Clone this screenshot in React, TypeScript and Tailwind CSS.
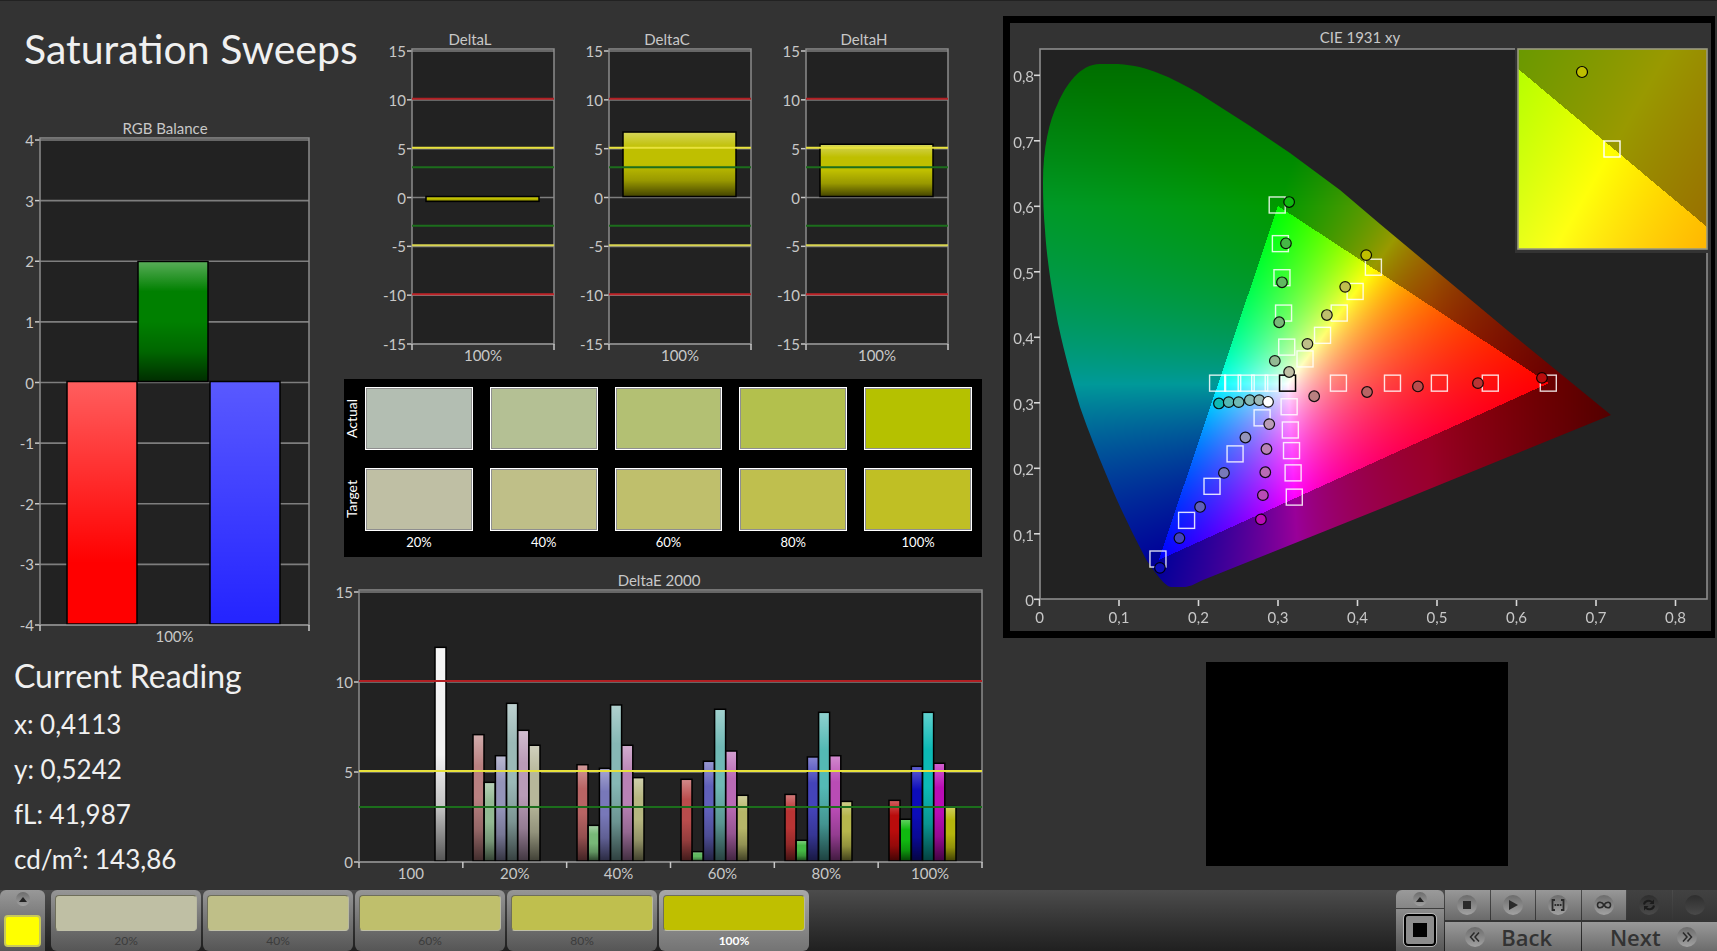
import { useLayoutEffect, useRef } from "react"
import type { ReactNode } from "react"
import clsx from "clsx"

interface Bar {
  x: number
  width: number
  value: number
  color: string
  shade?: string
}

interface Limit {
  value: number
  color: string
}

interface BarChartProps {
  title: string
  titleX: number
  width: number
  height: number
  left: number
  right: number
  top: number
  bottom: number
  min: number
  max: number
  step: number
  bars: Bar[]
  limits?: Limit[]
  categories: string[]
}

const AXIS_TEXT = "fill-[#c8c8c8] text-[15px]"

const deltaLimits: Limit[] = [
  { value: 10, color: "#b22024" },
  { value: 5, color: "#e8e23c" },
  { value: 3, color: "#1c6e1c" },
  { value: -3, color: "#1c6e1c" },
  { value: -5, color: "#d8d450" },
  { value: -10, color: "#c02428" },
]

const swatches = [
  { label: "20%", actual: "#b3beb2", target: "#bfbfa4" },
  { label: "40%", actual: "#b4c094", target: "#bfbf88" },
  { label: "60%", actual: "#b3c073", target: "#bfbf6c" },
  { label: "80%", actual: "#b3c04d", target: "#bfbf4e" },
  { label: "100%", actual: "#b5c100", target: "#c0bf24" },
]

const deltaE = [
  { label: "20%", values: [7.02, 4.37, 5.85, 8.76, 7.26, 6.43], colors: ["#b98080", "#93b993", "#9494b9", "#9bb9b7", "#b99bb7", "#b7b79a"] },
  { label: "40%", values: [5.35, 1.98, 5.15, 8.67, 6.43, 4.63], colors: ["#b96464", "#78b878", "#7878b9", "#86b8b5", "#b982b5", "#b6b680"] },
  { label: "60%", values: [4.54, 0.52, 5.54, 8.43, 6.11, 3.65], colors: ["#b94c4c", "#60b860", "#6060b9", "#70b9b5", "#b96ab5", "#b6b668"] },
  { label: "80%", values: [3.7, 1.15, 5.78, 8.26, 5.85, 3.31], colors: ["#b93434", "#45b845", "#4444b9", "#54b9b5", "#b94cb5", "#b6b64c"] },
  { label: "100%", values: [3.37, 2.32, 5.26, 8.26, 5.43, 3.02], colors: ["#b90c0c", "#10b910", "#0c0cb9", "#0cb9b5", "#b90cb5", "#b6b60c"] },
]

const deltaEBars: Bar[] = [
  { x: 105, width: 11, value: 11.87, color: "#f2f2f2" },
  ...deltaE.flatMap((group, g) =>
    group.values.map((value, i) => ({
      x: 143 + g * 104 + i * 11.2,
      width: 11,
      value,
      color: group.colors[i],
    })),
  ),
]

const targets: [number, number][] = [
  [0.299, 0.602], [0.303, 0.543], [0.305, 0.491], [0.307, 0.437], [0.311, 0.385],
  [0.42, 0.507], [0.397, 0.47], [0.377, 0.437], [0.356, 0.403], [0.334, 0.367],
  [0.376, 0.33], [0.444, 0.33], [0.503, 0.33], [0.567, 0.33], [0.64, 0.33],
  [0.224, 0.33], [0.243, 0.33], [0.26, 0.33], [0.277, 0.33], [0.294, 0.33],
  [0.314, 0.294], [0.3155, 0.2585], [0.317, 0.227], [0.319, 0.193], [0.3205, 0.156],
  [0.28, 0.277], [0.246, 0.222], [0.217, 0.1725], [0.185, 0.1205], [0.149, 0.0615],
]

const readings: [number, number, string][] = [
  [0.314, 0.6065, "#10b910"], [0.31, 0.5435, "#45b845"], [0.305, 0.484, "#60b860"], [0.3015, 0.423, "#78b878"], [0.296, 0.364, "#93b993"],
  [0.411, 0.5255, "#bfbf00"], [0.3845, 0.477, "#bfbf4e"], [0.3615, 0.434, "#bfbf6c"], [0.337, 0.39, "#bfbf88"], [0.314, 0.347, "#bfbfa4"],
  [0.3455, 0.31, "#b98080"], [0.412, 0.3165, "#b96464"], [0.476, 0.325, "#b94c4c"], [0.5515, 0.33, "#b93434"], [0.632, 0.338, "#b90c0c"],
  [0.2257, 0.299, "#10b9b5"], [0.238, 0.301, "#54b9b5"], [0.2505, 0.301, "#70b9b5"], [0.2645, 0.304, "#86b8b5"], [0.2765, 0.304, "#9bb9b7"],
  [0.289, 0.2675, "#b99bb7"], [0.2855, 0.2295, "#b982b5"], [0.284, 0.194, "#b96ab5"], [0.281, 0.159, "#b94cb5"], [0.2785, 0.122, "#b90cb5"],
  [0.259, 0.247, "#9494b9"], [0.232, 0.193, "#7878b9"], [0.202, 0.141, "#6060b9"], [0.176, 0.0935, "#4444b9"], [0.1515, 0.048, "#0c0cb9"],
  [0.2875, 0.3015, "#ffffff"],
]

// spectral locus in the panel's own units
const LOCUS =
  "M33 160 C33 125 39 98 48 80 C56 62 70 41 90 41 L108 41 C124 42 136 45 148 50 C162 55 176 63 190 71 L240 103 L280 130 L330 167 L370 201 L497 307 L601 392 L390 478 L193 557 C182 562 180 564 173 564 L162 564 C156 564 150 556 137 538 C128 521 116 497 107 477 C98 456 81 416 70 384 C62 358 54 328 49 305 C44 280 37 240 35 207 Q33 185 33 160 Z"

const cx = (x: number) => 29.5 + 795 * x
const cy = (y: number) => 576.3 - 655 * y

// linear sRGB at full intensity, dimmed outside the gamut triangle
function chromaColor(x: number, y: number): [number, number, number] {
  const X = x / y
  const Z = (1 - x - y) / y
  const lin = [
    3.2406 * X - 1.5372 - 0.4986 * Z,
    -0.9689 * X + 1.8758 + 0.0415 * Z,
    0.0557 * X - 0.204 + 1.057 * Z,
  ]
  const outside = lin.some((v) => v < -0.001)
  const peak = Math.max(...lin)
  const falloff = (1 - Math.max(0, x - 0.49) * 2) * (1 - Math.max(0, y - 0.6) * 1.3)
  const level = outside ? 153 * falloff : 255
  const [r, g, b] = lin.map((v) => (Math.max(v, 0) / peak) * level)
  return [r, g, b]
}

interface ChromaCanvasProps {
  width: number
  height: number
  toXY: (px: number, py: number) => [number, number]
  clip?: string
}

function ChromaCanvas({ width, height, toXY, clip }: ChromaCanvasProps) {
  const ref = useRef<HTMLCanvasElement>(null)

  useLayoutEffect(() => {
    const ctx = ref.current?.getContext("2d")
    if (!ctx) return
    const image = ctx.createImageData(width, height)
    for (let py = 0; py < height; py++) {
      for (let px = 0; px < width; px++) {
        const [x, y] = toXY(px + 0.5, py + 0.5)
        const [r, g, b] = chromaColor(x, Math.max(y, 0.001))
        const i = (py * width + px) * 4
        image.data[i] = r
        image.data[i + 1] = g
        image.data[i + 2] = b
        image.data[i + 3] = 255
      }
    }
    ctx.putImageData(image, 0, 0)
    if (clip) {
      ctx.globalCompositeOperation = "destination-in"
      ctx.fill(new Path2D(clip))
      ctx.globalCompositeOperation = "source-over"
    }
  }, [width, height, toXY, clip])

  return <canvas ref={ref} width={width} height={height} className="block" />
}

function Gradients() {
  return (
    <svg width="0" height="0" className="absolute" aria-hidden="true">
      <defs>
        <linearGradient id="gloss" x1="0" y1="0" x2="0" y2="1">
          <stop offset="0" stopColor="#fff" stopOpacity="0.35" />
          <stop offset="0.25" stopColor="#fff" stopOpacity="0" />
          <stop offset="0.5" stopColor="#000" stopOpacity="0" />
          <stop offset="0.75" stopColor="#000" stopOpacity="0.2" />
          <stop offset="1" stopColor="#000" stopOpacity="0.65" />
        </linearGradient>
        <linearGradient id="fade-red" x1="0" y1="0" x2="0" y2="1">
          <stop offset="0" stopColor="#fff" stopOpacity="0.37" />
          <stop offset="0.75" stopColor="#fff" stopOpacity="0" />
        </linearGradient>
        <linearGradient id="fade-blue" x1="0" y1="0" x2="0" y2="1">
          <stop offset="0" stopColor="#fff" stopOpacity="0.35" />
          <stop offset="1" stopColor="#fff" stopOpacity="0.14" />
        </linearGradient>
      </defs>
    </svg>
  )
}

function BarChart({
  title,
  titleX,
  width,
  height,
  left,
  right,
  top,
  bottom,
  min,
  max,
  step,
  bars,
  limits = [],
  categories,
}: BarChartProps) {
  const y = (v: number) => bottom - ((v - min) / (max - min)) * (bottom - top)
  const ticks: number[] = []
  for (let v = max; v >= min; v -= step) ticks.push(v)
  const slot = (right - left) / categories.length

  return (
    <svg viewBox={`0 0 ${width} ${height}`} className="block w-full" role="img" aria-label={title}>
      <text x={titleX} y={top - 6} textAnchor="middle" className={AXIS_TEXT}>
        {title}
      </text>
      <rect x={left} y={top - 2} width={right - left} height={bottom - top + 2} fill="#222222" />
      {ticks.map((v) => (
        <g key={v}>
          <line x1={left} x2={right} y1={y(v)} y2={y(v)} stroke="#7e7e7e" strokeWidth="1.6" />
          <line x1={left - 5} x2={left} y1={y(v)} y2={y(v)} stroke="#c8c8c8" strokeWidth="1.5" />
          <text x={left - 6} y={y(v) + 6} textAnchor="end" className={AXIS_TEXT}>
            {v}
          </text>
        </g>
      ))}
      {bars.map((bar, i) => {
        const y0 = y(Math.max(bar.value, 0)) - 1
        const h = Math.abs(y(bar.value) - y(0))
        return (
          <g key={i}>
            <rect x={bar.x} y={y0} width={bar.width} height={h} fill={bar.color} />
            <rect
              x={bar.x}
              y={y0}
              width={bar.width}
              height={h}
              fill={`url(#${bar.shade ?? "gloss"})`}
              stroke="#000"
              strokeWidth="1.5"
            />
          </g>
        )
      })}
      <path
        d={`M${left} ${bottom}V${top - 2}H${right}V${bottom}Z`}
        fill="none"
        stroke="#8c8c8c"
        strokeWidth="1.5"
      />
      {limits.map((limit) => (
        <line
          key={limit.value}
          x1={left}
          x2={right}
          y1={y(limit.value) - 1}
          y2={y(limit.value) - 1}
          stroke={limit.color}
          strokeWidth="2"
        />
      ))}
      {categories.map((label, i) => (
        <text key={label} x={left + slot * (i + 0.5)} y={bottom + 17} textAnchor="middle" className={AXIS_TEXT}>
          {label}
        </text>
      ))}
      {[...categories, "end"].map((key, i) => (
        <line
          key={key}
          x1={left + slot * i}
          x2={left + slot * i}
          y1={bottom}
          y2={bottom + 6}
          stroke="#c8c8c8"
          strokeWidth="1.5"
        />
      ))}
    </svg>
  )
}

const mainXY = (px: number, py: number): [number, number] => [(px - 29.5) / 795, (576.3 - py) / 655]
const insetXY = (px: number, py: number): [number, number] => [0.4193 + (px - 94) / 3800, 0.5053 - (py - 100) / 4000]

function CieDiagram() {
  return (
    <svg viewBox="0 0 701 608" className="block w-full" role="img" aria-label="CIE 1931 xy">
      <text x="350" y="20" textAnchor="middle" className={AXIS_TEXT}>
        CIE 1931 xy
      </text>
      <rect x="30" y="26" width="667" height="550" fill="#222222" />
      <foreignObject x="0" y="0" width="701" height="608">
        <ChromaCanvas width={701} height={608} toXY={mainXY} clip={LOCUS} />
      </foreignObject>
      <rect x="30" y="26" width="667" height="550" fill="none" stroke="#8c8c8c" strokeWidth="1.6" />
      {[0, 1, 2, 3, 4, 5, 6, 7, 8].map((n) => (
        <g key={n}>
          <line x1={cx(n / 10)} x2={cx(n / 10)} y1="577" y2="583" stroke="#d8d8d8" strokeWidth="1.6" />
          <text x={cx(n / 10)} y="600" textAnchor="middle" className={AXIS_TEXT}>
            {n === 0 ? "0" : `0,${n}`}
          </text>
          <line x1="24" x2="30" y1={cy(n / 10)} y2={cy(n / 10)} stroke="#d8d8d8" strokeWidth="1.6" />
          <text x="24" y={cy(n / 10) + 7} textAnchor="end" className={AXIS_TEXT}>
            {n === 0 ? "0" : `0,${n}`}
          </text>
        </g>
      ))}
      {targets.map(([x, y]) => (
        <rect
          key={`${x}-${y}`}
          x={cx(x) - 8}
          y={cy(y) - 8}
          width="16"
          height="16"
          fill="none"
          stroke="#fff"
          strokeOpacity="0.85"
          strokeWidth="1.4"
        />
      ))}
      <rect x={cx(0.312) - 8} y={cy(0.33) - 8} width="16" height="16" fill="none" stroke="#000" strokeWidth="1.5" />
      {readings.map(([x, y, color]) => (
        <circle key={`${x}-${y}`} cx={cx(x)} cy={cy(y)} r="5.3" fill={color} stroke="#000" strokeOpacity="0.9" strokeWidth="1.2" />
      ))}
      <rect x="505" y="23" width="194" height="207" fill="#333333" />
      <foreignObject x="508" y="26" width="189" height="200">
        <ChromaCanvas width={189} height={200} toXY={insetXY} />
      </foreignObject>
      <rect x="508" y="26" width="189" height="200" fill="none" stroke="#9a9a80" strokeWidth="1.6" />
      <rect x="594" y="118" width="16" height="16" fill="none" stroke="#fff" strokeWidth="1.4" />
      <circle cx="572" cy="49" r="5.5" fill="#bfbf00" stroke="#000" strokeWidth="1.2" />
    </svg>
  )
}

function SwatchRow({ label, colors }: { label: string; colors: string[] }) {
  return (
    <div className="flex items-stretch">
      <div className="flex w-[21px] items-center">
        <span className="rotate-180 text-sm leading-4 [writing-mode:vertical-rl]">{label}</span>
      </div>
      <div className="grid flex-1 grid-cols-5 gap-[17px]">
        {colors.map((color) => (
          <div
            key={color}
            className="h-[63px] border border-white shadow-[inset_0_0_0_1px_#8f8f8f]"
            style={{ backgroundColor: color }}
          />
        ))}
      </div>
    </div>
  )
}

function ComparePanel() {
  return (
    <section className="mt-[9px] mr-[21px] ml-[14px] h-[178px] bg-black pt-2 pr-[10px] text-white">
      <div className="flex flex-col gap-[18px]">
        <SwatchRow label="Actual" colors={swatches.map((s) => s.actual)} />
        <SwatchRow label="Target" colors={swatches.map((s) => s.target)} />
      </div>
      <div className="mt-[3px] ml-[21px] grid grid-cols-5 gap-[17px] text-center text-[13px] leading-4">
        {swatches.map((s) => (
          <span key={s.label}>{s.label}</span>
        ))}
      </div>
    </section>
  )
}

function Knob({ children, dark, small }: { children?: ReactNode; dark?: boolean; small?: boolean }) {
  return (
    <span
      className={clsx(
        "flex shrink-0 items-center justify-center rounded-full bg-linear-to-b",
        small ? "size-[14px]" : "size-5",
        dark ? "from-[#2e2e2e] to-[#4a4a4a]" : "from-[#6c6c6c] to-[#a2a2a2]",
      )}
    >
      {children}
    </span>
  )
}

function UpArrow() {
  return (
    <svg viewBox="0 0 10 6" className="h-[5px] w-2" aria-hidden="true">
      <path d="M5 0L10 6H0Z" fill="#222" />
    </svg>
  )
}

const transport = [
  {
    name: "Stop",
    icon: <path d="M6 6H14V14H6Z" fill="#2a2a2a" />,
  },
  {
    name: "Play",
    icon: <path d="M6 5L15 10L6 15Z" fill="#2a2a2a" />,
  },
  {
    name: "Read series",
    icon: (
      <g fill="none" stroke="#2a2a2a" strokeWidth="1.8">
        <path d="M7 5H4.500V15H7M13 5H15.500V15H13" />
        <path d="M6.500 10H13.500" strokeDasharray="1.8 0.8" />
      </g>
    ),
  },
  {
    name: "Read continuously",
    icon: (
      <path
        d="M10 10C8 6.500 3.500 6 3.500 10C3.500 14 8 13.500 10 10C12 6.500 16.500 6 16.500 10C16.500 14 12 13.500 10 10Z"
        fill="none"
        stroke="#2a2a2a"
        strokeWidth="1.6"
      />
    ),
  },
  {
    name: "Refresh",
    dark: true,
    icon: (
      <g fill="none" stroke="#1c1c1c" strokeWidth="2">
        <path d="M5 9.500C5.500 6 10 4.500 13 7M15 10.500C14.500 14 10 15.500 7 13" />
        <path d="M15 4.500V9H10.500ZM5 15.500V11H9.500Z" fill="#1c1c1c" stroke="none" />
      </g>
    ),
  },
  { name: "Record", dark: true, icon: null },
]

function Chevrons({ flip }: { flip?: boolean }) {
  return (
    <svg viewBox="0 0 20 20" className={clsx("size-5", flip && "rotate-180")} aria-hidden="true">
      <path d="M9.500 5.500L5.500 10L9.500 14.500M14 5.500L10 10L14 14.500" fill="none" stroke="#2a2a2a" strokeWidth="1.5" />
    </svg>
  )
}

function BottomBar() {
  return (
    <footer className="flex h-[61px] bg-linear-to-b from-[#4c4c4c] to-[#202020]">
      <button
        aria-label="Choose color"
        className="mr-[6px] flex w-[45px] flex-col items-center justify-between rounded-t-md bg-linear-to-b from-[#989898] to-[#565656] px-1 pt-[2px] pb-1"
      >
        <Knob small>
          <UpArrow />
        </Knob>
        <span className="h-8 w-full rounded border-2 border-[#c8c85a] bg-[#ffff00]" />
      </button>
      <div className="flex gap-[2px]">
        {swatches.map((s, i) => {
          const active = i === swatches.length - 1
          return (
            <button
              key={s.label}
              className={clsx(
                "flex w-[150px] flex-col rounded-md bg-linear-to-b px-1 pt-[5px] text-[12px] leading-5",
                active
                  ? "from-[#a8a8a8] to-[#747474] font-bold text-white"
                  : "from-[#969696] to-[#565656] text-[#3c3c3c]",
              )}
            >
              <span
                className="h-[37px] w-full rounded border border-t-[#6e6e5a] border-r-[#b8b8a0] border-b-[#c0c0a8] border-l-[#6e6e5a]"
                style={{ backgroundColor: active ? "#bfbf00" : s.target }}
              />
              <span className="w-full text-center">{s.label}</span>
            </button>
          )
        })}
      </div>
      <div className="ml-auto flex gap-px">
        <div className="flex w-12 flex-col">
          <button
            aria-label="Show patterns"
            className="flex h-[18px] items-center justify-center rounded-t-md bg-linear-to-b from-[#9a9a9a] to-[#868686]"
          >
            <Knob small>
              <UpArrow />
            </Knob>
          </button>
          <button
            aria-label="Pattern window"
            className="mt-px flex flex-1 items-center justify-center bg-linear-to-b from-[#8c8c8c] to-[#585858]"
          >
            <span className="flex size-8 items-center justify-center rounded border-2 border-black bg-[#8c8c8c] outline outline-[#b4b4b4]">
              <span className="size-[14px] bg-black" />
            </span>
          </button>
        </div>
        <div className="flex w-[272px] flex-col gap-[2px]">
          <div className="grid h-[30px] grid-cols-6 gap-px">
            {transport.map((t) => (
              <button
                key={t.name}
                aria-label={t.name}
                className={clsx(
                  "flex items-center justify-center bg-linear-to-b",
                  t.dark ? "from-[#424242] to-[#343434]" : "from-[#989898] to-[#6a6a6a]",
                )}
              >
                <Knob dark={t.dark}>
                  <svg viewBox="0 0 20 20" className="size-5">
                    {t.icon}
                  </svg>
                </Knob>
              </button>
            ))}
          </div>
          <div className="grid flex-1 grid-cols-2 gap-px font-['Open_Sans',sans-serif] text-[22px] leading-7 font-semibold text-[#333333]">
            <button className="flex items-center justify-center gap-4 bg-linear-to-b from-[#9a9a9a] to-[#6c6c6c] pr-2">
              <Knob>
                <Chevrons />
              </Knob>
              Back
            </button>
            <button className="flex items-center justify-center gap-4 bg-linear-to-b from-[#9a9a9a] to-[#6c6c6c] pl-2">
              Next
              <Knob>
                <Chevrons flip />
              </Knob>
            </button>
          </div>
        </div>
      </div>
    </footer>
  )
}

function DeltaChart({ title, value }: { title: string; value: number }) {
  return (
    <BarChart
      title={title}
      titleX={88}
      width={197}
      height={340}
      left={30}
      right={172}
      top={21}
      bottom={314}
      min={-15}
      max={15}
      step={5}
      limits={deltaLimits}
      categories={["100%"]}
      bars={[{ x: 44, width: 113, value, color: "#bfbf00" }]}
    />
  )
}

export default function App() {
  return (
    <div className="flex min-h-screen flex-col border-t border-[#222222] bg-[#333333] font-['Lato',sans-serif] text-[#f0f0f0]">
      <Gradients />
      <main className="grid flex-1 grid-cols-[minmax(0,330fr)_minmax(0,673fr)_minmax(0,714fr)] items-start">
        <div>
          <h1 className="pt-6 pl-6 text-[41px] leading-[48px] whitespace-nowrap">Saturation Sweeps</h1>
          <div className="mt-[42px]">
            <BarChart
              title="RGB Balance"
              titleX={165}
              width={330}
              height={535}
              left={40}
              right={309}
              top={25}
              bottom={510}
              min={-4}
              max={4}
              step={1}
              categories={["100%"]}
              bars={[
                { x: 67, width: 70, value: -4, color: "#ff0000", shade: "fade-red" },
                { x: 138, width: 70, value: 1.98, color: "#008000" },
                { x: 210, width: 70, value: -4, color: "#0000ff", shade: "fade-blue" },
              ]}
            />
          </div>
          <section className="pl-[14px] text-[26px] leading-[45px]">
            <h2 className="pt-[3px] pb-1 text-[32px] leading-[45px]">Current Reading</h2>
            <p>x: 0,4113</p>
            <p>y: 0,5242</p>
            <p>fL: 41,987</p>
            <p>cd/m²: 143,86</p>
          </section>
        </div>

        <div>
          <div className="mr-[30px] ml-[52px] grid grid-cols-3 pt-[29px]">
            <DeltaChart title="DeltaL" value={-0.5} />
            <DeltaChart title="DeltaC" value={6.6} />
            <DeltaChart title="DeltaH" value={5.35} />
          </div>
          <ComparePanel />
          <BarChart
            title="DeltaE 2000"
            titleX={329}
            width={673}
            height={325}
            left={29}
            right={652}
            top={35}
            bottom={305}
            min={0}
            max={15}
            step={5}
            limits={deltaLimits.filter((l) => l.value > 0)}
            categories={["100", ...deltaE.map((g) => g.label)]}
            bars={deltaEBars}
          />
        </div>

        <div className="pt-[15px] pr-[2px]">
          <div className="border-7 border-r-4 border-black">
            <CieDiagram />
          </div>
          <div className="mt-6 mr-[207px] ml-auto aspect-[302/204] w-[302px] bg-black" />
        </div>
      </main>
      <BottomBar />
    </div>
  )
}
